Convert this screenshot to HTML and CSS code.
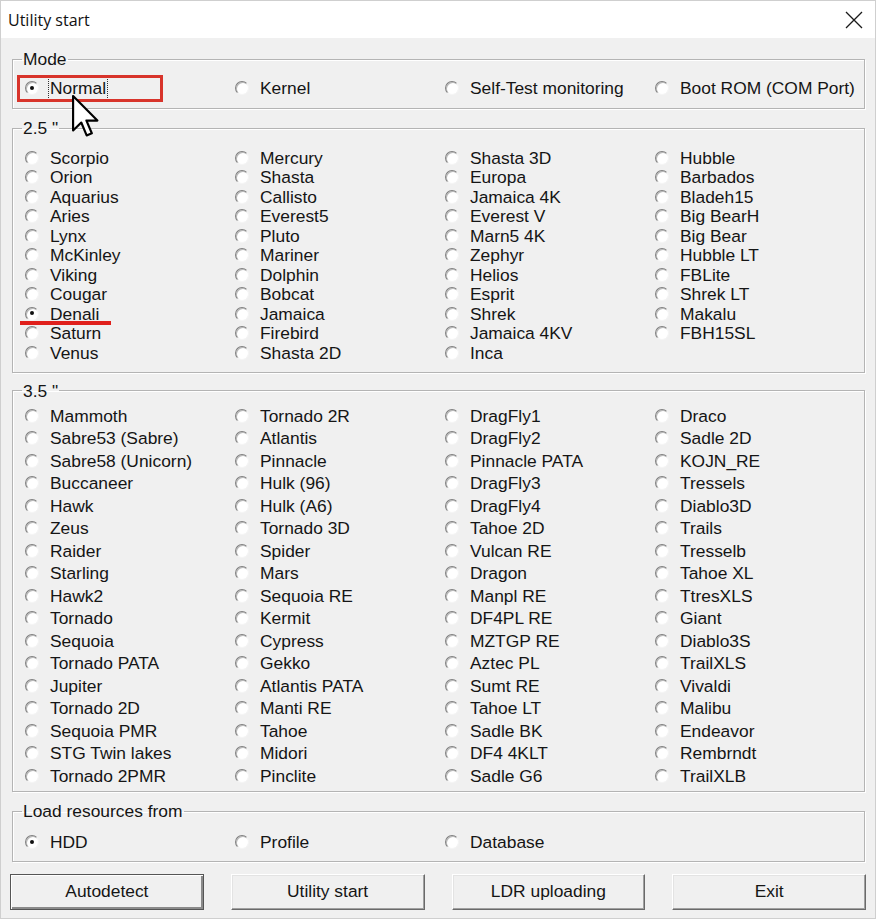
FILE: index.html
```html
<!DOCTYPE html>
<html lang="en">
<head>
  <meta charset="UTF-8">
  <title>Utility start</title>
  <link rel="stylesheet" href="styles.css">
</head>
<body>
  <div class="window">
    <div class="title-bar">
      <span class="title">Utility start</span>
      <svg class="close" width="18" height="18" viewBox="0 0 18 18">
        <path d="M1 1 L17 17 M17 1 L1 17" stroke="#1a1a1a" stroke-width="1.3" fill="none"/>
      </svg>
    </div>

    <fieldset class="group mode">
      <legend>Mode</legend>
      <div class="options one-row">
        <label class="opt"><span class="radio on"></span><span class="focus">Normal</span></label>
        <label class="opt"><span class="radio"></span>Kernel</label>
        <label class="opt"><span class="radio"></span>Self-Test monitoring</label>
        <label class="opt"><span class="radio"></span>Boot ROM (COM Port)</label>
      </div>
    </fieldset>

    <fieldset class="group size25">
      <legend>2.5 "</legend>
      <div class="options rows11">
        <label class="opt"><span class="radio"></span>Scorpio</label>
        <label class="opt"><span class="radio"></span>Orion</label>
        <label class="opt"><span class="radio"></span>Aquarius</label>
        <label class="opt"><span class="radio"></span>Aries</label>
        <label class="opt"><span class="radio"></span>Lynx</label>
        <label class="opt"><span class="radio"></span>McKinley</label>
        <label class="opt"><span class="radio"></span>Viking</label>
        <label class="opt"><span class="radio"></span>Cougar</label>
        <label class="opt"><span class="radio on"></span>Denali</label>
        <label class="opt"><span class="radio"></span>Saturn</label>
        <label class="opt"><span class="radio"></span>Venus</label>

        <label class="opt"><span class="radio"></span>Mercury</label>
        <label class="opt"><span class="radio"></span>Shasta</label>
        <label class="opt"><span class="radio"></span>Callisto</label>
        <label class="opt"><span class="radio"></span>Everest5</label>
        <label class="opt"><span class="radio"></span>Pluto</label>
        <label class="opt"><span class="radio"></span>Mariner</label>
        <label class="opt"><span class="radio"></span>Dolphin</label>
        <label class="opt"><span class="radio"></span>Bobcat</label>
        <label class="opt"><span class="radio"></span>Jamaica</label>
        <label class="opt"><span class="radio"></span>Firebird</label>
        <label class="opt"><span class="radio"></span>Shasta 2D</label>

        <label class="opt"><span class="radio"></span>Shasta 3D</label>
        <label class="opt"><span class="radio"></span>Europa</label>
        <label class="opt"><span class="radio"></span>Jamaica 4K</label>
        <label class="opt"><span class="radio"></span>Everest V</label>
        <label class="opt"><span class="radio"></span>Marn5 4K</label>
        <label class="opt"><span class="radio"></span>Zephyr</label>
        <label class="opt"><span class="radio"></span>Helios</label>
        <label class="opt"><span class="radio"></span>Esprit</label>
        <label class="opt"><span class="radio"></span>Shrek</label>
        <label class="opt"><span class="radio"></span>Jamaica 4KV</label>
        <label class="opt"><span class="radio"></span>Inca</label>

        <label class="opt"><span class="radio"></span>Hubble</label>
        <label class="opt"><span class="radio"></span>Barbados</label>
        <label class="opt"><span class="radio"></span>Bladeh15</label>
        <label class="opt"><span class="radio"></span>Big BearH</label>
        <label class="opt"><span class="radio"></span>Big Bear</label>
        <label class="opt"><span class="radio"></span>Hubble LT</label>
        <label class="opt"><span class="radio"></span>FBLite</label>
        <label class="opt"><span class="radio"></span>Shrek LT</label>
        <label class="opt"><span class="radio"></span>Makalu</label>
        <label class="opt"><span class="radio"></span>FBH15SL</label>
      </div>
    </fieldset>

    <fieldset class="group size35">
      <legend>3.5 "</legend>
      <div class="options rows17">
        <label class="opt"><span class="radio"></span>Mammoth</label>
        <label class="opt"><span class="radio"></span>Sabre53 (Sabre)</label>
        <label class="opt"><span class="radio"></span>Sabre58 (Unicorn)</label>
        <label class="opt"><span class="radio"></span>Buccaneer</label>
        <label class="opt"><span class="radio"></span>Hawk</label>
        <label class="opt"><span class="radio"></span>Zeus</label>
        <label class="opt"><span class="radio"></span>Raider</label>
        <label class="opt"><span class="radio"></span>Starling</label>
        <label class="opt"><span class="radio"></span>Hawk2</label>
        <label class="opt"><span class="radio"></span>Tornado</label>
        <label class="opt"><span class="radio"></span>Sequoia</label>
        <label class="opt"><span class="radio"></span>Tornado PATA</label>
        <label class="opt"><span class="radio"></span>Jupiter</label>
        <label class="opt"><span class="radio"></span>Tornado 2D</label>
        <label class="opt"><span class="radio"></span>Sequoia PMR</label>
        <label class="opt"><span class="radio"></span>STG Twin lakes</label>
        <label class="opt"><span class="radio"></span>Tornado 2PMR</label>

        <label class="opt"><span class="radio"></span>Tornado 2R</label>
        <label class="opt"><span class="radio"></span>Atlantis</label>
        <label class="opt"><span class="radio"></span>Pinnacle</label>
        <label class="opt"><span class="radio"></span>Hulk (96)</label>
        <label class="opt"><span class="radio"></span>Hulk (A6)</label>
        <label class="opt"><span class="radio"></span>Tornado 3D</label>
        <label class="opt"><span class="radio"></span>Spider</label>
        <label class="opt"><span class="radio"></span>Mars</label>
        <label class="opt"><span class="radio"></span>Sequoia RE</label>
        <label class="opt"><span class="radio"></span>Kermit</label>
        <label class="opt"><span class="radio"></span>Cypress</label>
        <label class="opt"><span class="radio"></span>Gekko</label>
        <label class="opt"><span class="radio"></span>Atlantis PATA</label>
        <label class="opt"><span class="radio"></span>Manti RE</label>
        <label class="opt"><span class="radio"></span>Tahoe</label>
        <label class="opt"><span class="radio"></span>Midori</label>
        <label class="opt"><span class="radio"></span>Pinclite</label>

        <label class="opt"><span class="radio"></span>DragFly1</label>
        <label class="opt"><span class="radio"></span>DragFly2</label>
        <label class="opt"><span class="radio"></span>Pinnacle PATA</label>
        <label class="opt"><span class="radio"></span>DragFly3</label>
        <label class="opt"><span class="radio"></span>DragFly4</label>
        <label class="opt"><span class="radio"></span>Tahoe 2D</label>
        <label class="opt"><span class="radio"></span>Vulcan RE</label>
        <label class="opt"><span class="radio"></span>Dragon</label>
        <label class="opt"><span class="radio"></span>Manpl RE</label>
        <label class="opt"><span class="radio"></span>DF4PL RE</label>
        <label class="opt"><span class="radio"></span>MZTGP RE</label>
        <label class="opt"><span class="radio"></span>Aztec PL</label>
        <label class="opt"><span class="radio"></span>Sumt RE</label>
        <label class="opt"><span class="radio"></span>Tahoe LT</label>
        <label class="opt"><span class="radio"></span>Sadle BK</label>
        <label class="opt"><span class="radio"></span>DF4 4KLT</label>
        <label class="opt"><span class="radio"></span>Sadle G6</label>

        <label class="opt"><span class="radio"></span>Draco</label>
        <label class="opt"><span class="radio"></span>Sadle 2D</label>
        <label class="opt"><span class="radio"></span>KOJN_RE</label>
        <label class="opt"><span class="radio"></span>Tressels</label>
        <label class="opt"><span class="radio"></span>Diablo3D</label>
        <label class="opt"><span class="radio"></span>Trails</label>
        <label class="opt"><span class="radio"></span>Tresselb</label>
        <label class="opt"><span class="radio"></span>Tahoe XL</label>
        <label class="opt"><span class="radio"></span>TtresXLS</label>
        <label class="opt"><span class="radio"></span>Giant</label>
        <label class="opt"><span class="radio"></span>Diablo3S</label>
        <label class="opt"><span class="radio"></span>TrailXLS</label>
        <label class="opt"><span class="radio"></span>Vivaldi</label>
        <label class="opt"><span class="radio"></span>Malibu</label>
        <label class="opt"><span class="radio"></span>Endeavor</label>
        <label class="opt"><span class="radio"></span>Rembrndt</label>
        <label class="opt"><span class="radio"></span>TrailXLB</label>
      </div>
    </fieldset>

    <fieldset class="group load">
      <legend>Load resources from</legend>
      <div class="options one-row">
        <label class="opt"><span class="radio on"></span>HDD</label>
        <label class="opt"><span class="radio"></span>Profile</label>
        <label class="opt"><span class="radio"></span>Database</label>
      </div>
    </fieldset>

    <div class="buttons">
      <button class="btn default">Autodetect</button>
      <button class="btn">Utility start</button>
      <button class="btn">LDR uploading</button>
      <button class="btn">Exit</button>
    </div>

    <!-- annotations drawn over the dialog -->
    <div class="mark-box"></div>
    <div class="mark-line"></div>
    <svg class="cursor" width="28" height="43" viewBox="0 0 13 20">
      <path d="M0.5 0.5 L0.5 16.5 L4.3 12.8 L6.8 18.8 L9.2 17.8 L6.7 11.9 L11.8 11.9 Z" fill="#fff" stroke="#000" stroke-width="1" stroke-linejoin="round"/>
    </svg>
  </div>
</body>
</html>
```

FILE: styles.css
```css
body {
  margin: 0;
  font-family: "Liberation Sans", Arial, sans-serif;
  font-size: 17.4px;
  color: #151515;
  background-color: #f0f0f0;
}

.window {
  position: relative;
  box-sizing: border-box;
  width: 876px;
  height: 919px;
  border: 1px solid #cfcfcf;
  background-color: #f0f0f0;
  overflow: hidden;
}

.title-bar {
  display: flex;
  align-items: center;
  justify-content: space-between;
  height: 37px;
  padding: 0 12px 0 7px;
  background-color: #ffffff;
}

.title {
  font-family: "Open Sans", Arial, sans-serif;
  font-size: 16px;
  color: #111;
}

.group {
  margin: 0 10px 0 11px;
  border: 1px solid #b4b4b4;
  box-shadow: inset 1px 1px 0 #ffffff, 1px 1px 0 #ffffff;
  min-inline-size: 0;
}

.group legend {
  margin-left: -3px;
  padding: 0 1px;
  line-height: 20px;
}

.mode {
  margin-top: 11px;
  padding: 9px 12px 10px 12px;
}

.size25 {
  margin-top: 9px;
  padding: 10px 12px 9px 12px;
}

.size35 {
  margin-top: 8px;
  padding: 4px 12px 4px 12px;
}

.load {
  margin-top: 9px;
  padding: 11px 12px 9px 12px;
}

.options {
  display: grid;
  grid-template-columns: repeat(4, 210px);
  grid-auto-flow: column;
}

.one-row {
  grid-template-rows: 20px;
}

.rows11 {
  grid-template-rows: repeat(11, 19.5px);
}

.rows17 {
  grid-template-rows: repeat(17, 22.5px);
}

.opt {
  display: flex;
  align-items: center;
  gap: 11px;
  line-height: 19px;
  padding-top: 1px;
  white-space: nowrap;
}

.radio {
  position: relative;
  flex: none;
  box-sizing: border-box;
  width: 14px;
  height: 14px;
  margin-top: -1px;
  border-radius: 50%;
  border: 1.5px solid;
  border-color: #808080 #f4f4f4 #f4f4f4 #808080;
  background-color: #ffffff;
  box-shadow: inset 1px 1px 0 #b8b8b8;
}

.radio.on::after {
  content: "";
  position: absolute;
  left: 3.5px;
  top: 3.5px;
  width: 4px;
  height: 4px;
  border-radius: 50%;
  background-color: #111;
}

.focus {
  outline: 1px dotted #333;
  outline-offset: 1px;
}

.buttons {
  display: grid;
  grid-template-columns: repeat(4, 1fr);
  gap: 27px;
  margin: 12px 9px 0 9px;
}

.btn {
  height: 36px;
  padding: 0 0 2px 0;
  font-family: "Liberation Sans", Arial, sans-serif;
  font-size: 17.4px;
  color: #151515;
  background-color: #f0f0f0;
  border: 1px solid;
  border-color: #ffffff #6a6a6a #6a6a6a #ffffff;
  box-shadow: inset -1px -1px 0 #a0a0a0, inset 1px 1px 0 #e3e3e3;
}

.btn.default {
  border-color: #555555;
  box-shadow: inset 1px 1px 0 #ffffff, inset -2px -2px 0 #8a8a8a;
}

.mark-box {
  position: absolute;
  left: 16px;
  top: 74px;
  width: 140px;
  height: 21px;
  border: 3px solid #d8342b;
}

.mark-line {
  position: absolute;
  left: 19px;
  top: 320px;
  width: 91px;
  height: 4px;
  background-color: #e0201c;
}

.cursor {
  position: absolute;
  left: 71px;
  top: 94px;
}
```
